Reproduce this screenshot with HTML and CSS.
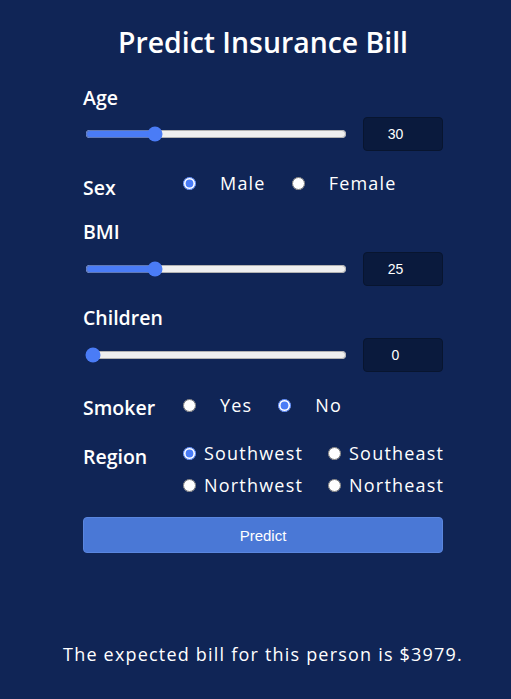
FILE: index.html
```html
<!DOCTYPE html>
<html lang="en">
<head>
<meta charset="utf-8">
<title>Predict Insurance Bill</title>
<link rel="stylesheet" href="styles.css">
</head>
<body>
<div class="page">
  <main class="form">
    <h1 class="title">Predict Insurance Bill</h1>

    <section class="field">
      <div class="label">Age</div>
      <div class="slider-row">
        <input class="range" type="range" min="18" max="66" value="30">
        <input class="num" type="number" value="30">
      </div>
    </section>

    <section class="choice">
      <div class="label label-sex">Sex</div>
      <div class="options">
        <label class="opt"><input class="radio" type="radio" name="sex" checked><span>Male</span></label>
        <label class="opt"><input class="radio" type="radio" name="sex"><span>Female</span></label>
      </div>
    </section>

    <section class="field">
      <div class="label">BMI</div>
      <div class="slider-row">
        <input class="range" type="range" min="15" max="55" value="25">
        <input class="num" type="number" value="25">
      </div>
    </section>

    <section class="field">
      <div class="label">Children</div>
      <div class="slider-row">
        <input class="range" type="range" min="0" max="5" value="0">
        <input class="num" type="number" value="0">
      </div>
    </section>

    <section class="choice">
      <div class="label label-smoker">Smoker</div>
      <div class="options">
        <label class="opt"><input class="radio" type="radio" name="smoker"><span>Yes</span></label>
        <label class="opt"><input class="radio" type="radio" name="smoker" checked><span>No</span></label>
      </div>
    </section>

    <section class="choice region">
      <div class="label label-region">Region</div>
      <div class="grid-options">
        <label class="gopt"><input class="radio" type="radio" name="region" checked><span>Southwest</span></label>
        <label class="gopt"><input class="radio" type="radio" name="region"><span>Southeast</span></label>
        <label class="gopt"><input class="radio" type="radio" name="region"><span>Northwest</span></label>
        <label class="gopt"><input class="radio" type="radio" name="region"><span>Northeast</span></label>
      </div>
    </section>

    <button class="predict" type="button">Predict</button>

    <p class="result">The expected bill for this person is $3979.</p>
  </main>
</div>
</body>
</html>
```

FILE: styles.css
```css
html, body {
  margin: 0;
  padding: 0;
  background: #102556;
}

body {
  font-family: "Open Sans", "DejaVu Sans", sans-serif;
  color: #ffffff;
}

.page {
  padding-left: 15px;
  min-height: 699px;
  box-sizing: border-box;
}

.form {
  width: 360px;
  margin: 0 auto;
  display: flex;
  flex-direction: column;
}

.title {
  margin: 23px 0 0;
  font-size: 28.4px;
  line-height: 38px;
  font-weight: 600;
  text-align: center;
}

.label {
  font-size: 19.5px;
  line-height: 24px;
  font-weight: 600;
}

.field {
  margin-top: 20px;
}

.field:nth-of-type(1) {
  margin-top: 25px;
}

.slider-row {
  margin-top: 8px;
  display: flex;
  align-items: center;
  height: 34px;
}

.field:nth-of-type(1) .slider-row {
  margin-top: 7px;
}

.range {
  flex: 1;
  margin: 0 2px;
  accent-color: #4a7cf6;
  height: 16px;
}

.num {
  width: 80px;
  height: 34px;
  box-sizing: border-box;
  margin-left: 14px;
  background: #0a1a3d;
  border: 1px solid #08152f;
  border-radius: 4px;
  color: #ffffff;
  font-family: "Liberation Sans", Arial, sans-serif;
  font-size: 14px;
  text-align: center;
  padding: 1px 17px 1px 2px;
  -moz-appearance: textfield;
}

.num::-webkit-inner-spin-button,
.num::-webkit-outer-spin-button {
  -webkit-appearance: none;
  margin: 0;
}

.choice {
  display: grid;
  grid-template-columns: 100px 1fr;
  align-items: start;
  margin-top: 20px;
}

.label-sex { padding-top: 5px; }
.label-smoker { padding-top: 3px; }
.label-region { padding-top: 4px; }

.choice:nth-of-type(5) { margin-top: 21px; }
.region { margin-top: 21px; }

.options {
  display: flex;
  align-items: center;
}

.opt, .gopt {
  display: flex;
  align-items: center;
  font-size: 18px;
  line-height: 24px;
  letter-spacing: 1.2px;
}

.opt {
  margin-right: 26px;
}

.radio {
  width: 13px;
  height: 13px;
  margin: 0;
  accent-color: #4a7cf6;
}

.opt .radio {
  margin-right: 24px;
}

.gopt .radio {
  margin-right: 8px;
}

.grid-options {
  display: grid;
  grid-template-columns: auto auto;
  justify-content: start;
  column-gap: 25px;
  row-gap: 8px;
}

.predict {
  margin-top: 20px;
  height: 36px;
  width: 100%;
  background: #4a78d6;
  border: 1px solid #5a86de;
  border-radius: 4px;
  color: #ffffff;
  font-family: "Liberation Sans", Arial, sans-serif;
  font-size: 15px;
  padding: 0;
}

.result {
  margin: 89px -40px 0;
  font-size: 18px;
  line-height: 24px;
  letter-spacing: 1.2px;
  text-align: center;
}
```
